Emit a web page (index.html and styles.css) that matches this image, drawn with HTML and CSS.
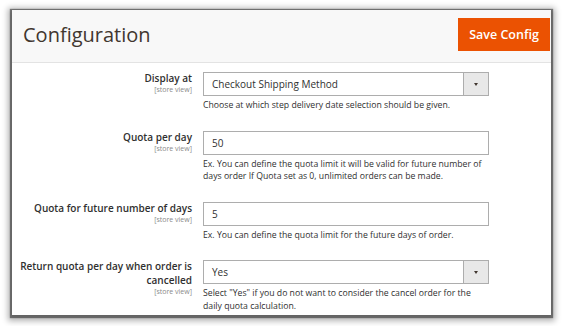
FILE: index.html
```html
<!DOCTYPE html>
<html>
<head>
<meta charset="utf-8">
<link rel="stylesheet" href="styles.css">
</head>
<body>
<div class="panel">
  <div class="header">
    <h1 class="title">Configuration</h1>
    <button class="save">Save Config</button>
  </div>
  <div class="content">
    <div class="row">
      <div class="label"><div class="name">Display at</div><div class="scope">[store view]</div></div>
      <div class="control">
        <div class="select"><span class="value">Checkout Shipping Method</span><span class="arrow"></span></div>
        <div class="note">Choose at which step delivery date selection should be given.</div>
      </div>
    </div>
    <div class="row">
      <div class="label"><div class="name">Quota per day</div><div class="scope">[store view]</div></div>
      <div class="control">
        <div class="input"><span class="value">50</span></div>
        <div class="note">Ex. You can define the quota limit it will be valid for future number of<br>days order If Quota set as 0, unlimited orders can be made.</div>
      </div>
    </div>
    <div class="row">
      <div class="label"><div class="name">Quota for future number of days</div><div class="scope">[store view]</div></div>
      <div class="control">
        <div class="input"><span class="value">5</span></div>
        <div class="note">Ex. You can define the quota limit for the future days of order.</div>
      </div>
    </div>
    <div class="row">
      <div class="label"><div class="name">Return quota per day when order is cancelled</div><div class="scope">[store view]</div></div>
      <div class="control">
        <div class="select"><span class="value">Yes</span><span class="arrow"></span></div>
        <div class="note">Select "Yes" if you do not want to consider the cancel order for the<br>daily quota calculation.</div>
      </div>
    </div>
  </div>
</div>
</body>
</html>
```

FILE: styles.css
```css
html, body {
  margin: 0;
  padding: 0;
  background: #ffffff;
}
body {
  box-sizing: border-box;
  min-height: 326px;
  padding: 10px 14px 11px 12px;
  font-family: "Open Sans", "DejaVu Sans", sans-serif;
  color: #303030;
}
.panel {
  width: 539px;
  height: 305px;
  background: #ffffff;
  box-shadow: 0 1px 1px 2px rgba(0, 0, 0, 0.45), 0 2px 6px 4px rgba(0, 0, 0, 0.3);
  overflow: hidden;
}
.header {
  background: #f8f8f8;
  border-bottom: 1px solid #e3e3e3;
  display: flex;
  justify-content: space-between;
  align-items: flex-start;
  padding: 8px 1px 0 11px;
  height: 44px;
}
.title {
  margin: 4.5px 0 0 0;
  font-size: 20px;
  line-height: 24px;
  font-weight: 400;
  color: #41362f;
}
.save {
  width: 92px;
  height: 33px;
  margin: 0;
  padding: 0;
  border: none;
  background: #eb5202;
  color: #ffffff;
  font-family: "Open Sans", "DejaVu Sans", sans-serif;
  font-size: 12.5px;
  font-weight: 600;
}
.content {
  padding-top: 9px;
}
.row {
  display: grid;
  grid-template-columns: 180px 286px;
  column-gap: 11px;
  margin-bottom: 19px;
}
.label {
  text-align: right;
  margin-top: -0.7px;
}
.name {
  font-size: 10px;
  line-height: 14px;
  font-weight: 600;
  color: #303030;
}
.scope {
  font-size: 7px;
  line-height: 9px;
  color: #8a8a8a;
}
.select, .input {
  height: 24px;
  box-sizing: border-box;
  border: 1px solid #adadad;
  background: #ffffff;
  display: flex;
  align-items: center;
}
.value {
  flex: 1;
  padding-left: 8px;
  font-size: 10px;
  color: #303030;
}
.arrow {
  width: 24px;
  height: 22px;
  border-left: 1px solid #adadad;
  background: #e8e8e8;
  display: flex;
  align-items: center;
  justify-content: center;
}
.arrow::after {
  content: "";
  width: 0;
  height: 0;
  border-left: 2.5px solid transparent;
  border-right: 2.5px solid transparent;
  border-top: 3px solid #41362f;
}
.note {
  margin-top: 3px;
  font-size: 8.7px;
  line-height: 12.5px;
  color: #303030;
  white-space: nowrap;
}
```
